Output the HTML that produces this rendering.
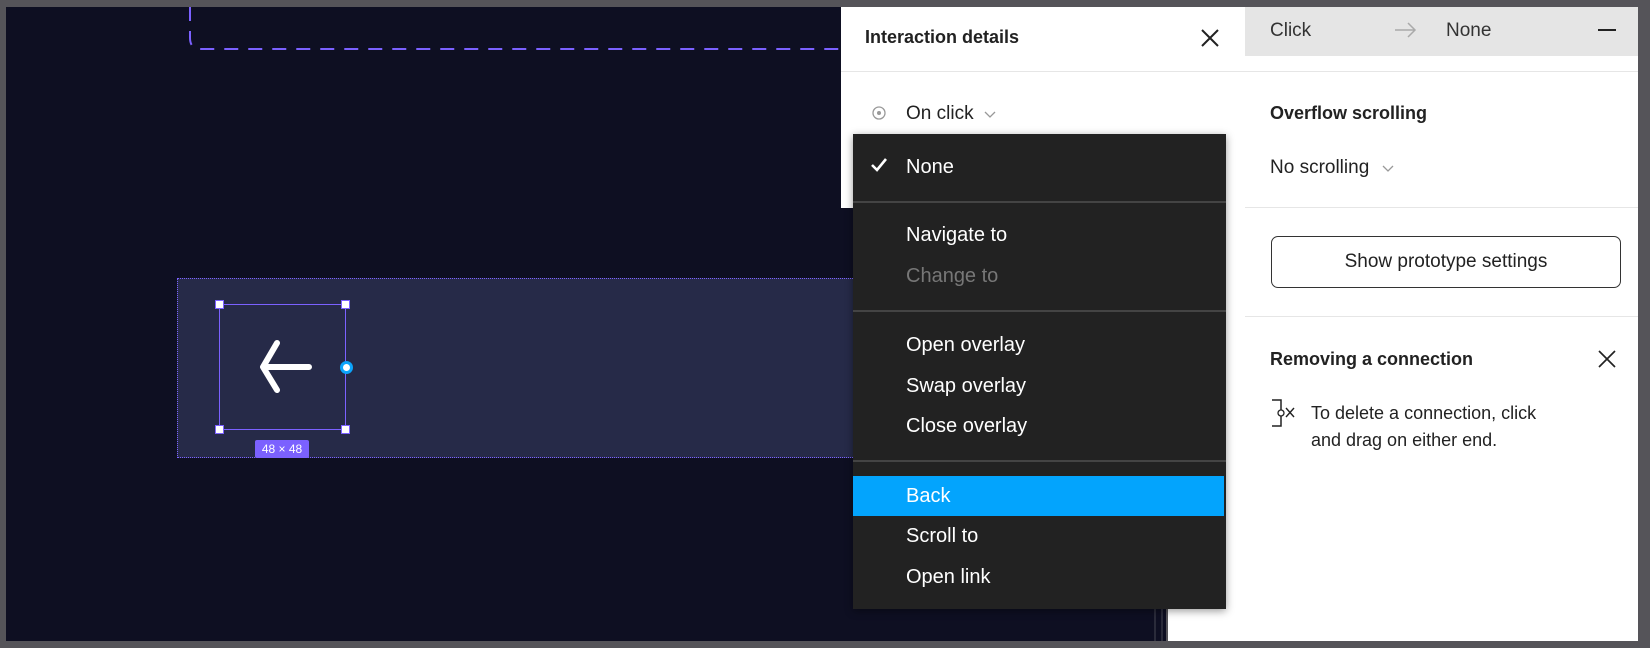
<!DOCTYPE html>
<html><head><meta charset="utf-8"><style>
*{margin:0;padding:0;box-sizing:border-box}
body{width:1650px;height:648px;background:#555459;position:relative;overflow:hidden;font-family:"Liberation Sans",sans-serif}
.a{position:absolute}
.t{position:absolute;white-space:nowrap;line-height:1}
</style></head><body>
<div class="a" style="left:6px;top:7px;width:1160px;height:634px;background:#0e0f22"></div>
<div class="a" style="left:1154px;top:200px;width:2px;height:441px;background:#2a2b3a"></div>
<div class="a" style="left:1161px;top:200px;width:2px;height:441px;background:#2a2b3a"></div>
<svg class="a" style="left:0;top:0" width="860" height="80"><path d="M190 7 V38 Q190 49 201 49 H860" fill="none" stroke="#7b61ff" stroke-width="2" stroke-dasharray="14 10"/></svg>
<div class="a" style="left:177px;top:278px;width:700px;height:180px;background:#262a48;border:1px dotted #7b61ff"></div>
<div class="a" style="left:219px;top:304px;width:127px;height:126px;border:1px solid #7b61ff"></div>
<div class="a" style="left:215px;top:300px;width:9px;height:9px;background:#fff;border:1px solid #7b61ff"></div>
<div class="a" style="left:341px;top:300px;width:9px;height:9px;background:#fff;border:1px solid #7b61ff"></div>
<div class="a" style="left:215px;top:425px;width:9px;height:9px;background:#fff;border:1px solid #7b61ff"></div>
<div class="a" style="left:341px;top:425px;width:9px;height:9px;background:#fff;border:1px solid #7b61ff"></div>
<div class="a" style="left:340px;top:361px;width:13px;height:13px;background:#fff;border:3px solid #0ca4fb;border-radius:50%"></div>
<svg class="a" style="left:250px;top:337px" width="70" height="60"><path d="M27 6 L13 30 L27 53 M13 30 H59" fill="none" stroke="#fff" stroke-width="6" stroke-linecap="round" stroke-linejoin="round"/></svg>
<div class="a" style="left:255px;top:440px;width:54px;height:18px;background:#7b61ff;border-radius:2px;color:#fff;font-size:12px;text-align:center;line-height:18px">48 × 48</div>
<div class="a" style="left:841px;top:7px;width:404px;height:201px;background:#fff"></div>
<div class="a" style="left:841px;top:71px;width:404px;height:1px;background:#e6e6e6"></div>
<div class="t" style="left:865px;top:28px;font-size:18px;font-weight:bold;color:#222">Interaction details</div>
<svg class="a" style="left:1200px;top:28px" width="20" height="20"><path d="M2 2L18 18M18 2L2 18" stroke="#222" stroke-width="2"/></svg>
<svg class="a" style="left:871px;top:105px" width="16" height="16"><circle cx="8" cy="8" r="6" fill="none" stroke="#999" stroke-width="1.3"/><circle cx="8" cy="8" r="2" fill="#999"/></svg>
<div class="t" style="left:906px;top:104px;font-size:19px;color:#222">On click</div>
<svg class="a" style="left:984px;top:110px" width="12" height="10"><path d="M1 2L6 7L11 2" fill="none" stroke="#999" stroke-width="1.3"/></svg>
<div class="a" style="left:1245px;top:7px;width:393px;height:634px;background:#fff"></div>
<div class="a" style="left:1168px;top:208px;width:470px;height:433px;background:#fff"></div>
<div class="a" style="left:1245px;top:7px;width:393px;height:49px;background:#e5e5e5"></div>
<div class="t" style="left:1270px;top:21px;font-size:19px;color:#333">Click</div>
<svg class="a" style="left:1393px;top:20px" width="26" height="20"><path d="M2 10H22M15 3L22 10L15 17" fill="none" stroke="#aaa" stroke-width="1.5"/></svg>
<div class="t" style="left:1446px;top:21px;font-size:19px;color:#333">None</div>
<div class="a" style="left:1598px;top:29px;width:18px;height:2px;background:#222"></div>
<div class="a" style="left:1245px;top:71px;width:393px;height:1px;background:#e6e6e6"></div>
<div class="t" style="left:1270px;top:104px;font-size:18px;font-weight:bold;color:#222">Overflow scrolling</div>
<div class="t" style="left:1270px;top:158px;font-size:19px;color:#222">No scrolling</div>
<svg class="a" style="left:1382px;top:164px" width="12" height="10"><path d="M1 2L6 7L11 2" fill="none" stroke="#999" stroke-width="1.3"/></svg>
<div class="a" style="left:1245px;top:207px;width:393px;height:1px;background:#e6e6e6"></div>
<div class="a" style="left:1271px;top:236px;width:350px;height:52px;border:1.5px solid #333;border-radius:7px;font-size:19px;color:#222;text-align:center;line-height:49px">Show prototype settings</div>
<div class="a" style="left:1245px;top:316px;width:393px;height:1px;background:#e6e6e6"></div>
<div class="t" style="left:1270px;top:350px;font-size:18px;font-weight:bold;color:#222">Removing a connection</div>
<svg class="a" style="left:1597px;top:349px" width="20" height="20"><path d="M2 2L18 18M18 2L2 18" stroke="#222" stroke-width="1.7"/></svg>
<svg class="a" style="left:1270px;top:398px" width="34" height="32"><path d="M2 2H11V28H2" fill="none" stroke="#222" stroke-width="1.5"/><circle cx="11" cy="15" r="3" fill="#fff" stroke="#222" stroke-width="1.3"/><path d="M16 10L24 19M24 10L16 19" stroke="#222" stroke-width="1.4"/></svg>
<div class="t" style="left:1311px;top:400px;font-size:18px;color:#222;line-height:27px">To delete a connection, click<br>and drag on either end.</div>
<div class="a" style="left:853px;top:134px;width:373px;height:475px;background:#222;box-shadow:0 2px 8px rgba(0,0,0,.4)"></div>
<div class="a" style="left:853px;top:201px;width:373px;height:2px;background:#444"></div>
<div class="a" style="left:853px;top:310px;width:373px;height:2px;background:#444"></div>
<div class="a" style="left:853px;top:460px;width:373px;height:2px;background:#444"></div>
<div class="a" style="left:853px;top:476px;width:371px;height:40px;background:#03a4fd"></div>
<svg class="a" style="left:870px;top:157px" width="18" height="16"><path d="M2 8L7 13L16 2" fill="none" stroke="#fff" stroke-width="2.6"/></svg>
<div class="t" style="left:906px;top:157px;font-size:20px;color:#fff">None</div>
<div class="t" style="left:906px;top:225px;font-size:20px;color:#fff">Navigate to</div>
<div class="t" style="left:906px;top:266px;font-size:20px;color:#777">Change to</div>
<div class="t" style="left:906px;top:335px;font-size:20px;color:#fff">Open overlay</div>
<div class="t" style="left:906px;top:376px;font-size:20px;color:#fff">Swap overlay</div>
<div class="t" style="left:906px;top:416px;font-size:20px;color:#fff">Close overlay</div>
<div class="t" style="left:906px;top:486px;font-size:20px;color:#fff">Back</div>
<div class="t" style="left:906px;top:526px;font-size:20px;color:#fff">Scroll to</div>
<div class="t" style="left:906px;top:567px;font-size:20px;color:#fff">Open link</div>
</body></html>
